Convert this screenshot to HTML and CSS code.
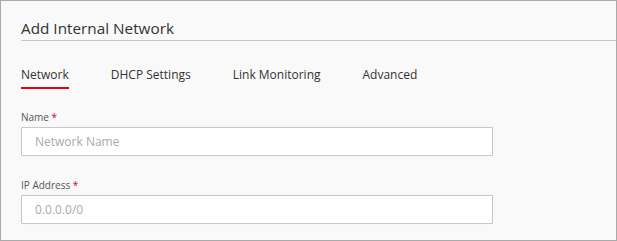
FILE: index.html
```html
<!DOCTYPE html>
<html lang="en">
<head>
    <meta charset="UTF-8">
    <title>Add Internal Network</title>
    <link rel="stylesheet" href="styles.css">
</head>
<body>

<div class="panel">
    <h1 class="panel-title">Add Internal Network</h1>

    <nav class="tabs">
        <a href="#" class="tab active">Network</a>
        <a href="#" class="tab">DHCP Settings</a>
        <a href="#" class="tab">Link Monitoring</a>
        <a href="#" class="tab">Advanced</a>
    </nav>

    <div class="form">
        <div class="field">
            <label for="network-name">Name <span class="req">*</span></label>
            <input type="text" id="network-name" placeholder="Network Name">
        </div>
        <div class="field">
            <label for="ip-address">IP Address <span class="req">*</span></label>
            <input type="text" id="ip-address" placeholder="0.0.0.0/0">
        </div>
    </div>
</div>

</body>
</html>
```

FILE: styles.css
```css
* {
    box-sizing: border-box;
}

body {
    margin: 0;
    font-family: "Open Sans", Arial, sans-serif;
    color: #333;
    background-color: #f9f9f9;
}

.panel {
    height: 241px;
    border: 1px solid #aaa;
    background-color: #f9f9f9;
    padding: 0 0 0 20px;
    overflow: hidden;
}

.panel-title {
    margin: 15px 0 0;
    font-size: 15.3px;
    font-weight: normal;
    line-height: 24px;
    border-bottom: 1px solid #c4c4c4;
    height: 25px;
    color: #333;
}

.tabs {
    display: flex;
    gap: 42px;
    margin-top: 24px;
}

.tab {
    color: #333;
    text-decoration: none;
    font-size: 12px;
    line-height: 20px;
    padding-bottom: 2px;
    border-bottom: 2px solid transparent;
}

.tab.active {
    border-bottom-color: #e8000f;
}

.form {
    margin-top: 21px;
}

.field {
    width: 472px;
    margin-bottom: 22px;
}

.field label {
    display: block;
    font-size: 10px;
    line-height: 14px;
    color: #555;
    margin-bottom: 3px;
}

.req {
    color: #d0021b;
}

.field input {
    display: block;
    width: 100%;
    height: 29px;
    padding: 0 13px;
    border: 1px solid #c8c8c8;
    border-radius: 1px;
    background: #fff;
    font-family: "Open Sans", Arial, sans-serif;
    font-size: 12px;
    color: #333;
    box-shadow: 0 0 1px rgba(0, 0, 0, 0.1);
}

.field input::placeholder {
    color: #aaa;
}
```
